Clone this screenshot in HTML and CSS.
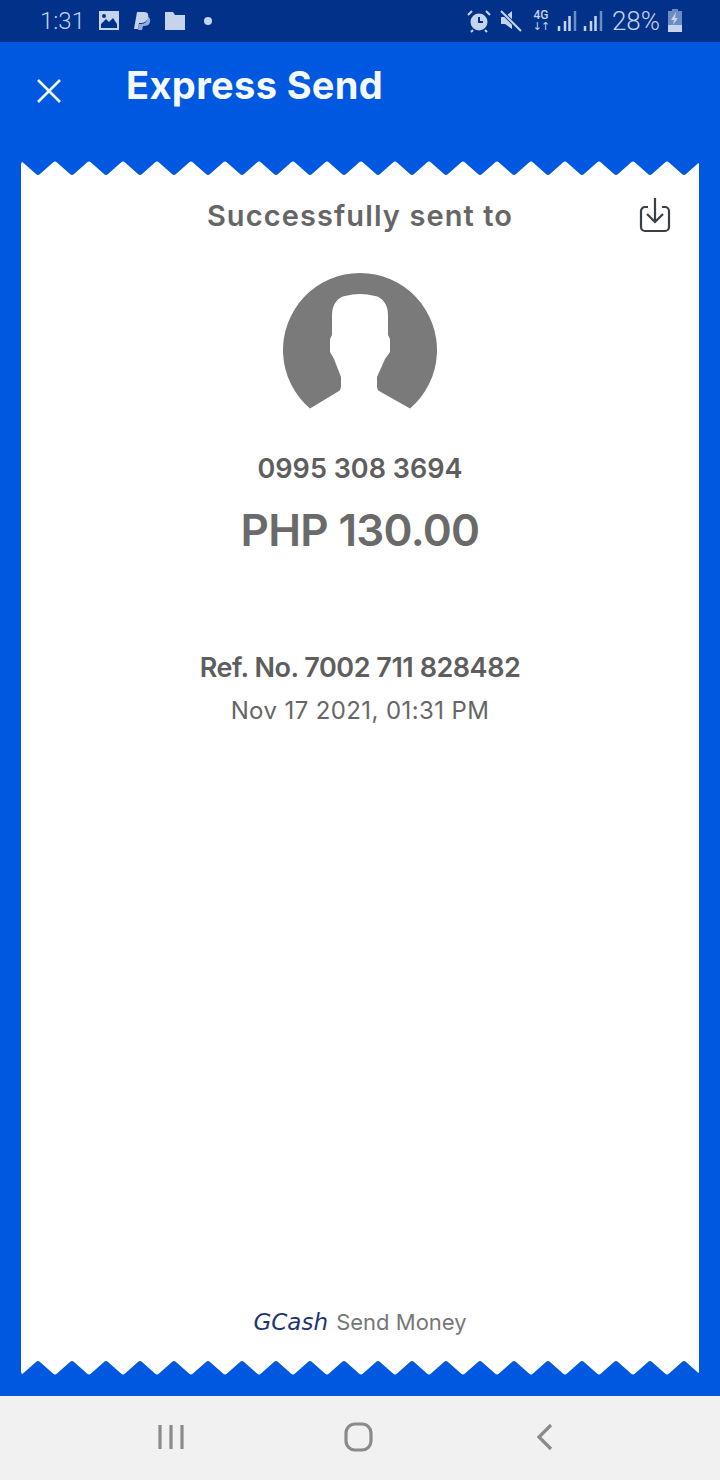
FILE: index.html
```html
<!DOCTYPE html>
<html lang="en">
<head>
    <meta charset="UTF-8">
    <meta name="viewport" content="width=device-width, initial-scale=1.0">
    <title>Express Send</title>
    <link rel="stylesheet" href="styles.css">
</head>
<body>
<div class="status-bar">
    <div class="status-left">
        <span class="clock">1:31</span>
        <svg class="status-icon" width="22" height="20" viewBox="0 0 22 20"><path fill="#c5d3ec" fill-rule="evenodd" d="M1 0h20v19H1zM3 13l5-5 3 3 4-4 4 6v4H3zM6 3a2 2 0 1 1 0 4 2 2 0 0 1 0-4z"/></svg>
        <svg class="status-icon" width="18" height="20" viewBox="0 0 18 20"><path fill="#93aedd" d="M14 5c2 1 4 3 3 6-1 3-3 4-6 4h-1l-1 4H5l1-6h2c4 0 7-3 6-8z"/><path fill="#c5d3ec" d="M4 1h7c4 0 5 3 4 6-1 3-4 5-7 5H6l-1 6H1z"/></svg>
        <svg class="status-icon" width="22" height="18" viewBox="0 0 22 18"><path fill="#c5d3ec" d="M1 0h8l2 3h10v15H1z"/></svg>
        <span class="status-dot"></span>
    </div>
    <div class="status-right">
        <svg width="24" height="24" viewBox="0 0 24 24"><circle cx="12" cy="13" r="8.500" fill="#c5d3ec"/><path d="M12 8v5h4" fill="none" stroke="#02318a" stroke-width="2"/><path d="M1 6l4-4M23 6l-4-4M6 21l-2 2M18 21l2 2" stroke="#c5d3ec" stroke-width="2"/></svg>
        <svg class="mute" width="22" height="24" viewBox="0 0 22 24"><path fill="#c5d3ec" d="M1 8h4l7-6v18l-7-5H1z"/><path d="M1 2l20 20" stroke="#02318a" stroke-width="4"/><path d="M1 2l20 20" stroke="#c5d3ec" stroke-width="2"/></svg>
        <span class="net"><span>4G</span><span class="net-arrows">↓↑</span></span>
        <svg class="signal-one" width="20" height="22" viewBox="0 0 20 22"><path d="M2 21v-5M8 21V11M12.500 21V6" stroke="#c5d3ec" stroke-width="2.500"/><path d="M18 21V1" stroke="#6d8cc4" stroke-width="2.500"/></svg>
        <svg class="signal-two" width="20" height="22" viewBox="0 0 20 22"><path d="M2 21v-5M8 21V11M12.500 21V6" stroke="#c5d3ec" stroke-width="2.500"/><path d="M18 21V1" stroke="#6d8cc4" stroke-width="2.500"/></svg>
        <span class="battery-text">28%</span>
        <svg class="battery" width="16" height="24" viewBox="0 0 16 24"><path fill="#6d8cc4" d="M5 0h6v2h4v14H1V2h4z"/><path fill="#c5d3ec" d="M1 16h14v7H1zM9 3L4 11h3l-1 5 5-7H8z"/></svg>
    </div>
</div>

<header class="app-bar">
    <svg class="close-icon" width="26" height="26" viewBox="0 0 26 26"><path d="M2 2l22 22M24 2L2 24" stroke="#eef6ff" stroke-width="2.600" fill="none"/></svg>
    <h1>Express Send</h1>
</header>

<main class="receipt">
    <svg class="zigzag" width="678" height="14" viewBox="0 0 678 14">
        <defs>
            <pattern id="teeth" x="17" y="0" width="34" height="14" patternUnits="userSpaceOnUse">
                <path fill="#ffffff" d="M0 14Q1 14 2 13L15 1.500Q17 -0.500 19 1.500L32 13Q33 14 34 14z"/>
            </pattern>
        </defs>
        <rect width="678" height="14" fill="url(#teeth)"/>
    </svg>
    <div class="receipt-body">
        <div class="receipt-head">
            <h2>Successfully sent to</h2>
            <svg class="save-icon" width="32" height="36" viewBox="0 0 32 36"><path d="M9 10H6a4 4 0 0 0-4 4v16a4 4 0 0 0 4 4h20a4 4 0 0 0 4-4V14a4 4 0 0 0-4-4h-3" fill="none" stroke="#3a3f46" stroke-width="2.200"/><path d="M16 1v24M8 17l8 8 8-8" fill="none" stroke="#3a3f46" stroke-width="2.200"/></svg>
        </div>
        <svg class="avatar" width="154" height="137" viewBox="0 0 154 137"><path fill="#7a7a7a" d="M27 135.600A77 77 0 1 1 127 135.600L96 118Q94 117 94 112V104L102 86 107 79V66L105 62V42C105 30 98 24 92 23Q77 19 62 23C56 24 49 30 49 42V62L47 66V79L51 86 58 104V112Q58 117 56 118z"/></svg>
        <p class="phone">0995 308 3694</p>
        <p class="amount">PHP 130.00</p>
        <p class="ref">Ref. No. 7002 711 828482</p>
        <p class="date">Nov 17 2021, 01:31 PM</p>
        <p class="footer"><span class="brand">GCash</span> Send Money</p>
    </div>
    <svg class="zigzag zigzag-bottom" width="678" height="14" viewBox="0 0 678 14">
        <rect width="678" height="14" fill="url(#teeth)"/>
    </svg>
</main>

<nav class="nav-bar">
    <svg width="28" height="26" viewBox="0 0 28 26"><path d="M3 1v24M14 1v24M25 1v24" stroke="#8a8a8a" stroke-width="3.200"/></svg>
    <svg class="home-icon" width="30" height="30" viewBox="0 0 30 30"><rect x="2" y="2" width="25" height="26" rx="9" fill="none" stroke="#8a8a8a" stroke-width="3.200"/></svg>
    <svg width="18" height="28" viewBox="0 0 18 28"><path d="M15 2L3 14l12 12" fill="none" stroke="#8a8a8a" stroke-width="3.200"/></svg>
</nav>
</body>
</html>
```

FILE: styles.css
```css
* {
  box-sizing: border-box;
}

body {
  font-family: Inter, "Liberation Sans", sans-serif;
  background-color: #0057e0;
  margin: 0;
  padding: 0;
  width: 720px;
  height: 1480px;
  display: flex;
  flex-direction: column;
  overflow: hidden;
}

h1, h2, p {
  margin: 0;
}

.status-bar {
  height: 42px;
  background-color: #02318a;
  color: #c5d3ec;
  display: flex;
  justify-content: space-between;
  align-items: center;
  padding: 0 37px 0 40px;
  font-family: Roboto, sans-serif;
}

.status-left, .status-right {
  display: flex;
  align-items: center;
}

.clock {
  font-size: 24px;
  font-weight: 300;
  margin-right: 13px;
}

.status-icon {
  margin-right: 13px;
}

.status-dot {
  width: 8px;
  height: 8px;
  border-radius: 50%;
  background-color: #c5d3ec;
  margin-left: 5px;
}

.mute {
  margin-left: 9px;
}

.net {
  display: flex;
  flex-direction: column;
  align-items: center;
  width: 16px;
  margin-left: 11px;
  font-size: 12px;
  font-weight: 500;
  line-height: 12px;
}

.net-arrows {
  font-family: "DejaVu Sans", sans-serif;
  font-size: 11px;
  letter-spacing: -1px;
}

.signal-one {
  margin-left: 8px;
}

.signal-two {
  margin-left: 6px;
}

.battery-text {
  margin-left: 9px;
  font-size: 26px;
  font-weight: 300;
}

.battery {
  margin-left: 7px;
}

.app-bar {
  height: 119px;
  display: flex;
  align-items: flex-start;
  padding: 23px 0 0 36px;
  color: #f4f9ff;
}

.close-icon {
  margin-top: 13px;
}

.app-bar h1 {
  font-size: 38px;
  font-weight: 700;
  letter-spacing: 0.35px;
  line-height: 40px;
  margin-left: 64px;
}

.receipt {
  flex: 1;
  margin: 0 21px 21px;
  display: flex;
  flex-direction: column;
}

.zigzag {
  display: block;
  flex: none;
  border-radius: 4px 4px 0 0;
}

.zigzag-bottom {
  transform: scaleY(-1);
}

.receipt-body {
  flex: 1;
  background-color: white;
  display: flex;
  flex-direction: column;
  align-items: center;
  text-align: center;
}

.receipt-head {
  width: 100%;
  display: grid;
  grid-template-columns: 1fr auto 1fr;
  align-items: start;
  padding: 22px 28px 0;
}

.receipt-head h2 {
  grid-column: 2;
  margin-top: 1px;
  font-size: 29px;
  font-weight: 600;
  letter-spacing: 1.1px;
  color: #666666;
  line-height: 36px;
}

.save-icon {
  justify-self: end;
}

.avatar {
  margin-top: 39px;
}

.phone {
  margin-top: 42px;
  font-size: 27px;
  font-weight: 600;
  color: #5e5e5e;
  line-height: 34px;
}

.amount {
  margin-top: 17px;
  font-size: 44px;
  font-weight: 600;
  color: #6a6a6a;
  line-height: 54px;
  letter-spacing: -0.7px;
}

.ref {
  margin-top: 94px;
  font-size: 27px;
  font-weight: 600;
  color: #5e5e5e;
  letter-spacing: -0.47px;
  line-height: 34px;
}

.date {
  margin-top: 10px;
  font-size: 24px;
  letter-spacing: 0.4px;
  color: #666666;
  line-height: 32px;
}

.footer {
  margin-top: auto;
  padding-bottom: 24px;
  font-size: 22px;
  color: #777777;
  line-height: 30px;
}

.brand {
  font-family: "DejaVu Sans", sans-serif;
  font-size: 23px;
  font-style: italic;
  color: #1a3572;
  margin-right: 2px;
}

.nav-bar {
  height: 84px;
  flex: none;
  background-color: #f1f1f1;
  display: flex;
  justify-content: space-between;
  align-items: center;
  padding: 0 166px 2px 157px;
}

.home-icon {
  margin-left: -4px;
}
```
